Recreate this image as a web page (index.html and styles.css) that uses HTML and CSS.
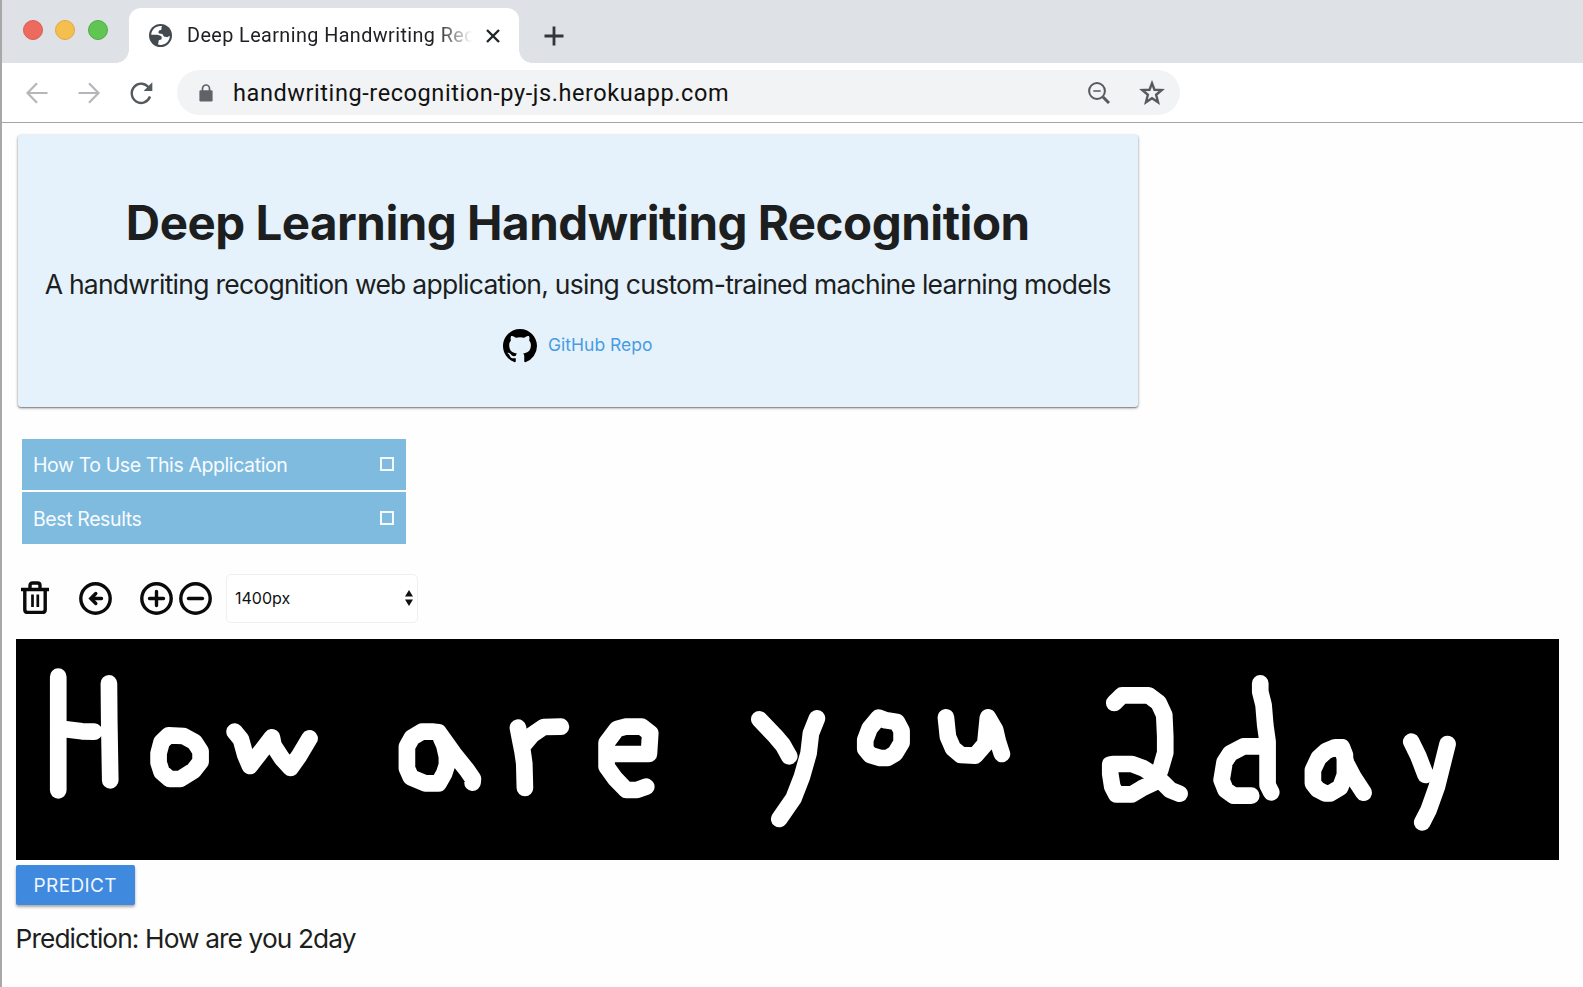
FILE: index.html
```html
<!DOCTYPE html>
<html lang="en">
<head>
<meta charset="utf-8">
<title>Deep Learning Handwriting Recognition</title>
<link rel="stylesheet" href="styles.css">
</head>
<body>
<div class="window">
  <header class="tabstrip">
    <div class="lights"><i class="light red"></i><i class="light yellow"></i><i class="light green"></i></div>
    <div class="tab">
      <svg class="globe" viewBox="0 0 24 24"><circle cx="12" cy="12" r="12" fill="#434a50"/><path d="M13.500 2.300C7.500 1.500 2.500 6 2.300 11.300H8.500l3 .7 1.700 1.200v2.600l-3 1.200-.8 4.500c6 1.500 12.300-2.500 12.300-9.300l-2.700 1.500-3.500-.7-1.500-2.500-3.500-.7-.8-1.300.8-1.700 2.500-.8V4z" fill="#fff"/></svg>
      <span class="tab-title">Deep Learning Handwriting Rec</span>
      <svg class="close" viewBox="0 0 14 14"><path d="M1 1l12 12M13 1L1 13"/></svg>
    </div>
    <svg class="newtab" viewBox="0 0 20 20"><path d="M10 .5v19M.5 10h19"/></svg>
  </header>
  <nav class="toolbar">
    <svg class="nav dim" viewBox="0 0 22 22"><path d="M21.500 11H1.500M11 1.200L1.500 11l9.500 9.800"/></svg>
    <svg class="nav dim" viewBox="0 0 22 22"><path d="M.5 11h20M11 1.200L20.500 11 11 20.800"/></svg>
    <svg class="nav" viewBox="0 0 22 22"><path d="M20 14.500A9.400 9.600 0 1 1 19 6"/><path class="solid" d="M22.300 .3V9h-8.700z"/></svg>
    <div class="address">
      <svg class="lock" viewBox="0 0 14 18"><path d="M3.500 7V4.500a3.500 3.500 0 0 1 7 0V7" fill="none" stroke="#5f6368" stroke-width="1.700"/><rect x=".4" y="6.200" width="13.200" height="11.400" rx="1.300" fill="#5f6368"/></svg>
      <span class="url">handwriting-recognition-py-js.herokuapp.com</span>
      <svg class="magnify" viewBox="0 0 22 22"><circle cx="9" cy="9" r="7.900"/><path d="M5.300 9h7.400" stroke-width="1.500"/><path d="M15 15l6 6" stroke-width="3"/></svg>
      <svg class="star" viewBox="0 0 24 24"><path d="M12 3l2.300 6 6.700.3-5.200 4.300 1.800 6.900L12 16.800l-5.600 3.700 1.800-6.900L3 9.300 9.700 9z"/></svg>
    </div>
  </nav>
  <main class="page">
    <section class="hero">
      <h1>Deep Learning Handwriting Recognition</h1>
      <p class="sub">A handwriting recognition web application, using custom-trained machine learning models</p>
      <a class="repo"><svg viewBox="0 0 16 16"><path d="M8 0C3.580 0 0 3.580 0 8c0 3.540 2.290 6.530 5.470 7.590.4.070.55-.17.55-.38 0-.19-.01-.82-.01-1.490-2.010.37-2.530-.49-2.690-.94-.09-.23-.48-.94-.82-1.130-.28-.15-.68-.52-.01-.53.63-.01 1.080.58 1.230.82.72 1.210 1.870.87 2.330.66.07-.52.28-.87.51-1.070-1.780-.2-3.640-.89-3.640-3.950 0-.87.31-1.590.82-2.150-.08-.2-.36-1.020.08-2.120 0 0 .67-.21 2.200.82a7.600 7.600 0 0 1 4 0c1.530-1.040 2.200-.82 2.200-.82.44 1.100.16 1.920.08 2.120.51.56.82 1.270.82 2.150 0 3.070-1.870 3.750-3.650 3.950.29.25.54.73.54 1.480 0 1.070-.01 1.930-.01 2.200 0 .21.15.46.55.38A8.010 8.010 0 0 0 16 8c0-4.420-3.580-8-8-8z"/></svg><span>GitHub Repo</span></a>
    </section>
    <section class="accordion">
      <div class="fold"><span>How To Use This Application</span><i class="box"></i></div>
      <div class="fold"><span>Best Results</span><i class="box"></i></div>
    </section>
    <section class="tools">
      <svg class="trash" viewBox="0 0 28 33"><path d="M0 8.500h28M3.800 8.500v20q0 3 3 3h14.400q3 0 3-3v-20M9 8V4.500Q9 2 11.500 2h5Q19 2 19 4.500V8"/><path d="M11.500 13.500v12.500M16.800 13.500v12.500" stroke-width="2.700"/></svg>
      <svg class="ring back" viewBox="0 0 33 33"><circle cx="16.500" cy="16.500" r="14.700"/><path d="M22.500 16.500H12M16.800 11.500l-5 5 5 5"/></svg>
      <svg class="ring plus" viewBox="0 0 33 33"><circle cx="16.500" cy="16.500" r="14.700"/><path d="M9.500 16.500h14M16.500 9.500v14"/></svg>
      <svg class="ring minus" viewBox="0 0 33 33"><circle cx="16.500" cy="16.500" r="14.700"/><path d="M9.500 16.500h14"/></svg>
      <div class="select"><span>1400px</span><svg viewBox="0 0 8 16"><path d="M4 0l4 6.500H0zM4 16l4-6.500H0z"/></svg></div>
    </section>
    <svg class="canvas" viewBox="16 639 1543 221">
      <g transform="translate(0 630) scale(.33333)">
        <path d="M174 140V481M326 160L327 275L330 451M190 297L245 304L282 305"/>
        <path d="M505 316L550 318L583 336L601 364V395L580 422L540 447H508L484 426L475 398V370L484 336Z"/>
        <path d="M703 305L722 328L735 375L749 408L778 370L815 322L820 347L845 385L871 414L895 380L928 325"/>
      </g>
      <g transform="translate(370 630) scale(.33333)">
        <path d="M205 307L190 305H155L125 323L110 350V415L122 442L165 460H205L222 430L230 405V380L222 345ZM205 307L250 370L290 420L308 446L307 458"/>
        <path d="M443 293L450 330L457 365L462 400L464 474M460 345L485 315L520 291L572 290"/>
        <path d="M715 372H836L840 310L815 290H765L740 297L709 338V410L735 446L768 480H800L828 470"/>
      </g>
      <g transform="translate(720 630) scale(.33333)">
        <path d="M117 268L165 318L188 345L207 379M290 265L272 310L265 370L245 440L220 505L177 567"/>
        <path d="M475 263L448 295L435 330V357L450 375L480 384H502L525 370L544 338V302L530 276L497 271Z"/>
        <path d="M677 262L683 320L698 355L722 375L765 377L795 342L803 262L825 300L833 335L845 372"/>
      </g>
      <g transform="translate(1080 630) scale(.33333)">
        <path d="M102 219L125 196H205L235 218L252 255L255 320V368L240 420L220 458L185 475L155 493H108L96 470L90 432V404L98 402H155L190 415L235 445L270 480L298 491"/>
        <path d="M540 160V185L550 225L555 285L562 335V465L573 487M560 349H490L450 370L433 396L424 450L436 480L460 497H513"/>
        <path d="M785 352H765L738 363L715 384L698 420V460L712 478L735 490H750L780 472L794 435V375ZM785 352L798 400L820 442L850 488"/>
        <path d="M993 335L1015 380L1036 435M1102 342L1085 410L1070 470L1045 540L1026 577"/>
      </g>
    </svg>
    <button class="predict"><span>PREDICT</span></button>
    <p class="result">Prediction: How are you 2day</p>
  </main>
</div>
</body>
</html>
```
FILE: styles.css
```css
* { box-sizing: border-box; }
body { margin: 0; background: #fff; font-family: Inter, sans-serif; color: #1c1e20; }
svg { display: block; flex: none; }
.window { height: 987px; overflow: hidden; border-left: 2px solid #a8a8a8; background: #fefefe; }
span { white-space: nowrap; }

.tabstrip { height: 63px; background: #dee1e6; display: flex; align-items: flex-start; font-family: Roboto, sans-serif; }
.lights { display: flex; gap: 12.500px; padding: 20px 0 0 20.500px; width: 126.500px; }
.light { width: 20px; height: 20px; border-radius: 50%; }
.red { background: #ed6a5e; border: 1px solid #dc5c50; }
.yellow { background: #f5bf4f; border: 1px solid #dfa940; }
.green { background: #61c554; border: 1px solid #52ad43; }
.tab { position: relative; width: 390.500px; height: 55px; margin-top: 8px; background: #fff; border-radius: 12px 12px 0 0; display: flex; align-items: center; padding-left: 20.500px; }
.tab::before, .tab::after { content: ""; position: absolute; bottom: 0; width: 13px; height: 13px; }
.tab::before { left: -13px; background: radial-gradient(circle at 0 0, transparent 12.500px, #fff 13px); }
.tab::after { right: -13px; background: radial-gradient(circle at 100% 0, transparent 12.500px, #fff 13px); }
.globe { width: 23px; height: 23px; }
.tab-title { width: 287px; margin-left: 15px; font-size: 19.800px; line-height: 28px; letter-spacing: .42px; color: #202124; -webkit-mask-image: linear-gradient(90deg, #000 250px, transparent 285px); mask-image: linear-gradient(90deg, #000 250px, transparent 285px); }
.close { width: 14px; height: 14px; margin-left: 11.500px; fill: none; stroke: #202628; stroke-width: 2.400; }
.newtab { width: 20px; height: 20px; margin: 25.500px 0 0 25px; fill: none; stroke: #30363a; stroke-width: 2.800; }

.toolbar { height: 60px; border-bottom: 1px solid #a5a5a5; background: #fff; display: flex; align-items: center; gap: 30px; padding-left: 24px; }
.nav { width: 22px; height: 22px; fill: none; stroke: #54595d; stroke-width: 2.400; overflow: visible; }
.nav.dim { stroke: #b4b6b9; stroke-width: 2.200; }
.nav .solid { fill: #54595d; stroke: none; }
.address { width: 1003px; height: 45px; margin-left: -5px; background: #f1f3f4; border-radius: 23px; display: flex; align-items: center; padding-left: 22px; margin-top: -1px; }
.lock { width: 14px; height: 18px; margin-top: 1px; }
.url { width: 855px; margin: 1px 0 0 20px; font: 23.500px/30px Roboto, sans-serif; letter-spacing: .58px; color: #111; }
.magnify { width: 22px; height: 22px; fill: none; stroke: #56595d; stroke-width: 2; margin-top: 1px; }
.star { width: 26px; height: 26px; margin: 1px 0 0 28.500px; fill: none; stroke: #56595d; stroke-width: 2.200; }

.page { padding: 12px 22px 0 13.500px; }
.hero { width: 1120.500px; height: 272px; margin-left: 2px; background: #e5f2fc; border-radius: 3px; box-shadow: 0 1px 3px rgba(0,0,0,.45), 0 1px 1px rgba(0,0,0,.2); display: flex; flex-direction: column; align-items: center; padding-top: 58px; }
h1 { margin: 0; font-size: 47.500px; line-height: 60px; font-weight: 700; letter-spacing: -.5px; white-space: nowrap; }
.sub { margin: 11px 0 0; font-size: 26.500px; line-height: 40px; letter-spacing: -.74px; white-space: nowrap; }
.repo { display: flex; align-items: center; gap: 11px; margin-top: 24px; color: #479ce2; font-size: 17.500px; line-height: 30px; }
.repo span { margin-top: -2px; }
.repo svg { width: 34px; height: 34px; fill: #000; margin-top: 1px; }
.accordion { width: 384px; margin: 31.500px 0 0 6.500px; display: flex; flex-direction: column; gap: 2.300px; }
.fold { height: 51.700px; background: #7fbbdf; color: #f8fcff; display: flex; align-items: center; justify-content: space-between; padding: 0 12px 0 11px; font-size: 19.500px; letter-spacing: -.4px; }
.fold span { margin-top: 1px; }
.box { width: 14px; height: 14px; border: 2px solid #f4faff; margin-top: -1px; }
.tools { height: 49px; margin-top: 29.500px; display: flex; align-items: center; }
.tools svg { fill: none; stroke: #0a0a0a; stroke-width: 3.400; }
.trash { width: 28px; height: 33px; margin: -1px 0 0 5.500px; }
.ring { width: 33px; height: 33px; stroke-linecap: round; }
.back { margin-left: 30px; }
.plus { margin-left: 27.500px; }
.minus { margin-left: 6px; }
.select { width: 192px; height: 49px; margin-left: 14.500px; border: 1px solid #efefef; border-radius: 5px; background: #fff; display: flex; align-items: center; justify-content: space-between; padding: 0 4px 0 8px; font-size: 16px; color: #111; }
.tools .select svg { width: 8px; height: 16px; fill: #111; stroke: none; }
.canvas { width: 1543.500px; height: 221px; margin-top: 16.300px; background: #000; fill: none; stroke: #fff; stroke-width: 50; stroke-linecap: round; stroke-linejoin: round; }
.predict { display: block; width: 119.500px; height: 40px; margin: 5px 0 0; padding: 1px 0 0; border: 0; border-radius: 2px; background: #3f89df; box-shadow: 0 2px 3px rgba(0,0,0,.35); color: #eef6ff; font: 19px/39px Inter, sans-serif; letter-spacing: .4px; }
.result { margin: 16px 0 0; font-size: 26.300px; line-height: 36px; letter-spacing: -.9px; white-space: nowrap; }
```
